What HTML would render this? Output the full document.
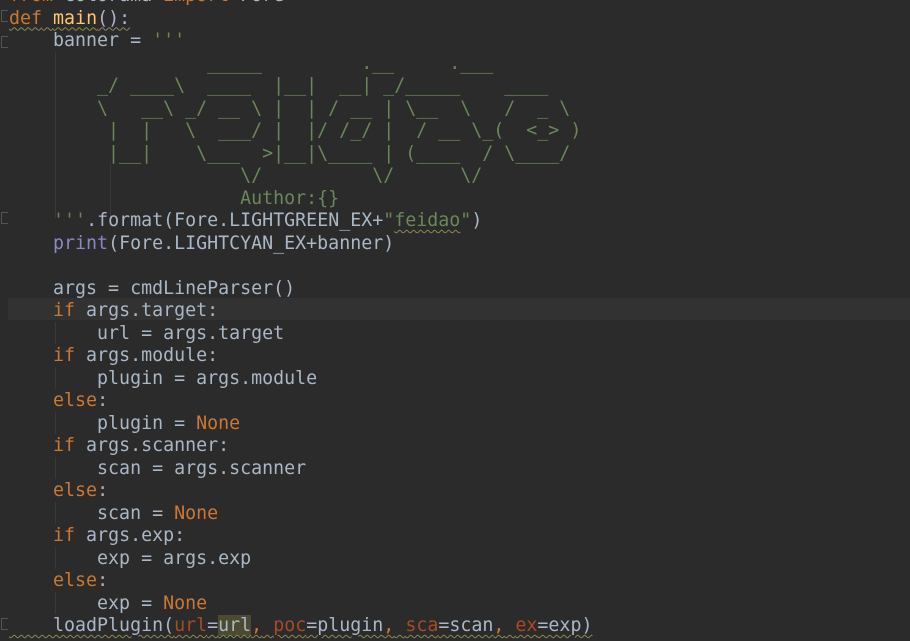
<!DOCTYPE html>
<html><head><meta charset="utf-8"><style>
html,body{margin:0;padding:0;}
body{width:910px;height:639px;background:#2b2b2b;overflow:hidden;position:relative;font-family:"DejaVu Sans Mono","Liberation Mono",monospace;font-size:18.3px;color:#a9b7c6;}
.l{position:absolute;left:9px;height:22.5px;line-height:22.5px;white-space:pre;}
.k{color:#cc7832}.f{color:#ffc66d}.s{color:#6a8759}.p{color:#8888c6}.n{color:#aa4926}
.w{text-decoration:underline wavy #8a8a50;text-decoration-thickness:1px;text-underline-offset:3px}
.g{position:absolute;width:1px;background:#393939}
.hl{position:absolute;left:8px;top:298px;width:902px;height:22px;background:#323232}
.fold{position:absolute;left:1px;width:6px;height:10px;border:1px solid #555;border-right:none}
#c{position:absolute;left:0;top:1.5px;width:910px;height:639px}
</style></head><body>
<div class="hl"></div>
<div class="g" style="left:55px;top:52px;height:166px"></div>
<div class="g" style="left:110px;top:163px;height:54px"></div>
<div class="g" style="left:55px;top:322px;height:22px"></div>
<div class="g" style="left:55px;top:367px;height:22px"></div>
<div class="g" style="left:55px;top:412px;height:22px"></div>
<div class="g" style="left:55px;top:457px;height:22px"></div>
<div class="g" style="left:55px;top:502px;height:22px"></div>
<div class="g" style="left:55px;top:547px;height:22px"></div>
<div class="g" style="left:55px;top:592px;height:22px"></div>
<div class="fold" style="top:10px"></div>
<div class="fold" style="top:36px"></div>
<div class="fold" style="top:212px"></div>
<div class="fold" style="top:618px"></div>
<div id="c">
<div class="l" style="top:-16.5px"><span class="k">from</span> colorama <span class="k">import</span> Fore</div>
<div class="l" style="top:6px"><span class="w"><span class="k">def</span> <span class="f">main</span>():</span></div>
<div class="l" style="top:28.5px">    banner = <span class="s">'''</span></div>
<div class="l s" style="top:51px">                  _____         .__     .___</div>
<div class="l s" style="top:73.5px">        _/ ____\  ____  |__|  __| _/_____    ____</div>
<div class="l s" style="top:96px">        \   __\ _/ __ \ |  | / __ | \__  \   /  _ \</div>
<div class="l s" style="top:118.5px">         |  |   \  ___/ |  |/ /_/ |  / __ \_(  &lt;_&gt; )</div>
<div class="l s" style="top:141px">         |__|    \___  &gt;|__|\____ | (____  / \____/</div>
<div class="l s" style="top:163.5px">                     \/          \/      \/</div>
<div class="l s" style="top:186px">                     Author:{}</div>
<div class="l" style="top:208.5px">    <span class="s">'''</span>.format(Fore.LIGHTGREEN_EX+<span class="s">"<span class="w">feidao</span>"</span>)</div>
<div class="l" style="top:231px">    <span class="p">print</span>(Fore.LIGHTCYAN_EX+banner)</div>
<div class="l" style="top:276px">    args = cmdLineParser()</div>
<div class="l" style="top:298.5px">    <span class="k">if</span> args.target:</div>
<div class="l" style="top:321px">        url = args.target</div>
<div class="l" style="top:343.5px">    <span class="k">if</span> args.module:</div>
<div class="l" style="top:366px">        plugin = args.module</div>
<div class="l" style="top:388.5px">    <span class="k">else</span>:</div>
<div class="l" style="top:411px">        plugin = <span class="k">None</span></div>
<div class="l" style="top:433.5px">    <span class="k">if</span> args.scanner:</div>
<div class="l" style="top:456px">        scan = args.scanner</div>
<div class="l" style="top:478.5px">    <span class="k">else</span>:</div>
<div class="l" style="top:501px">        scan = <span class="k">None</span></div>
<div class="l" style="top:523.5px">    <span class="k">if</span> args.exp:</div>
<div class="l" style="top:546px">        exp = args.exp</div>
<div class="l" style="top:568.5px">    <span class="k">else</span>:</div>
<div class="l" style="top:591px">        exp = <span class="k">None</span></div>
<div class="l" style="top:613.5px"><span class="w">    loadPlugin(<span class="n">url</span>=<span style="background:#4d4a33">url</span><span class="k">,</span> <span class="n">poc</span>=plugin<span class="k">,</span> <span class="n">sca</span>=scan<span class="k">,</span> <span class="n">ex</span>=exp)</span></div>
</div>
</body></html>
